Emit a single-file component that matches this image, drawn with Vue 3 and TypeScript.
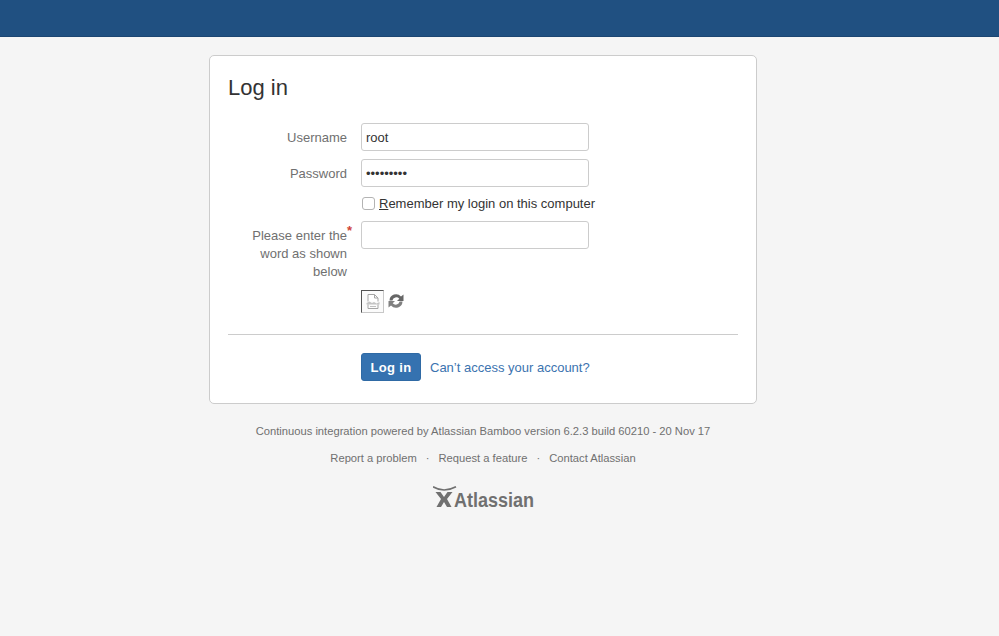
<script setup lang="ts">
import { ref } from 'vue'

const username = ref('root')
const password = ref('•••••••••')
const remember = ref(false)
const captcha = ref('')
</script>

<template>
  <div class="page">
    <header class="top-bar"></header>
    <main class="column">
      <section class="card">
        <h1>Log in</h1>
        <form class="login-form" @submit.prevent>
          <div class="row">
            <label class="field-label">Username</label>
            <input v-model="username" class="text" type="text" />
          </div>
          <div class="row">
            <label class="field-label">Password</label>
            <input v-model="password" class="text pw" type="text" />
          </div>
          <div class="row check-row">
            <span class="field-label"></span>
            <label class="check">
              <input v-model="remember" type="checkbox" />
              <span class="box"></span>
              <span><u>R</u>emember my login on this computer</span>
            </label>
          </div>
          <div class="row captcha-row">
            <label class="field-label">Please enter the<sup>*</sup> word as shown below</label>
            <input v-model="captcha" class="text" type="text" />
          </div>
          <div class="row image-row">
            <span class="field-label"></span>
            <span class="captcha-img">
              <svg width="16" height="17" viewBox="0 0 16 17">
                <path d="M3 8.500V1.500h6.500l3.500 3.500v3.500M9.500 1.500v3.500h3.500" fill="#fff" stroke="#a5a5a5" />
                <path d="M1.500 10l3-1.500 2.500 1.500 2-1 2.500 1.500 3-1.500v2.500h-13z" fill="#c4c4c4" />
                <path d="M3 11.500v4h10v-4" fill="none" stroke="#a5a5a5" />
                <path d="M5 13.500h6" stroke="#c0c0c0" />
              </svg>
            </span>
            <svg class="refresh" width="16" height="16" viewBox="0 0 16 16">
              <path d="M1.500 7.500A6.500 6.500 0 0 1 13 3.600L15.500 1.500V8H9l2.300-2.300A4 4 0 0 0 4.400 7.500z" fill="#666" />
              <path d="M14.500 8.500A6.500 6.500 0 0 1 3 12.400L.5 14.500V8H7l-2.300 2.300a4 4 0 0 0 6.900-1.800z" fill="#808080" />
            </svg>
          </div>
          <div class="actions">
            <span class="field-label"></span>
            <button class="submit" type="submit">Log in</button>
            <a class="forgot" href="#">Can’t access your account?</a>
          </div>
        </form>
      </section>

      <footer class="foot">
        <p class="version">Continuous integration powered by Atlassian Bamboo version 6.2.3 build 60210 - 20 Nov 17</p>
        <ul class="links">
          <li><a href="#">Report a problem</a></li>
          <li><a href="#">Request a feature</a></li>
          <li><a href="#">Contact Atlassian</a></li>
        </ul>
        <div class="logo">
          <svg width="24" height="22" viewBox="0 0 24 22">
            <path d="M0 .8C7 5 15 5 23 .8" fill="none" stroke="#707070" stroke-width="1.600" />
            <path d="M2.500 6h5l3.500 5 3.500-5h5l-5.500 7 4.500 8h-4.500l-3-5-3 5H3.500l4.500-8z" fill="#707070" />
          </svg>
          <span>Atlassian</span>
        </div>
      </footer>
    </main>
  </div>
</template>

<style>
html, body { margin: 0; background: #f5f5f5; }
</style>

<style scoped>
.page {
  min-height: 636px;
  background: #f5f5f5;
  font-family: "Liberation Sans", Arial, sans-serif;
  font-size: 13px;
  color: #333;
  overflow: hidden;
}
.top-bar {
  height: 37px;
  box-sizing: border-box;
  background: #205081;
  border-bottom: 1px solid #1c4672;
}
.column {
  width: 548px;
  margin: 18px 0 0 209px;
}
.card {
  box-sizing: border-box;
  height: 349px;
  padding: 19px 18px 0 18px;
  background: #fff;
  border: 1px solid #cccccc;
  border-radius: 5px;
}
h1 {
  margin: 0;
  font-size: 22px;
  font-weight: 400;
  line-height: 26px;
  color: #333;
}
.login-form {
  display: flex;
  flex-direction: column;
  margin-top: 22px;
}
.row {
  display: flex;
  align-items: flex-start;
  gap: 14px;
}
.row + .row { margin-top: 8px; }
.field-label {
  flex: 0 0 119px;
  text-align: right;
  line-height: 18px;
  padding-top: 6px;
  color: #707070;
}
.field-label sup {
  position: absolute;
  margin-top: -3px;
  font-size: 13px;
  font-weight: bold;
  line-height: 14px;
  color: #d04437;
}
.text {
  box-sizing: border-box;
  width: 228px;
  height: 28px;
  padding: 0 4px;
  border: 1px solid #cccccc;
  border-radius: 3px;
  background: #fff;
  font: 13px "Liberation Sans", Arial, sans-serif;
  color: #333;
  outline: none;
}
.check-row { margin-top: 8px; height: 18px; }
.check-row .field-label { padding-top: 0; }
.check {
  display: flex;
  align-items: center;
  gap: 4px;
  height: 17px;
  color: #333;
  white-space: nowrap;
}
.check input { display: none; }
.box {
  box-sizing: border-box;
  width: 13px;
  height: 13px;
  margin-left: 1px;
  border: 1px solid #b3b3b3;
  border-radius: 3px;
  background: #fff;
}
.row.captcha-row { margin-top: 8px; height: 59px; }
.row.image-row {
  margin-top: 10px;
  align-items: center;
  height: 22px;
}
.image-row .field-label { padding-top: 0; }
.captcha-img {
  box-sizing: border-box;
  display: flex;
  align-items: center;
  justify-content: center;
  width: 23px;
  height: 23px;
  margin-right: -10px;
  border: 1px solid #c8c8c8;
  border-top-color: #555;
  border-left-color: #555;
  background: #fbfbfb;
}
.actions {
  display: flex;
  align-items: center;
  gap: 14px;
  margin-top: 22px;
  padding-top: 18px;
  border-top: 1px solid #cccccc;
  width: 510px;
  box-sizing: border-box;
}
.actions .field-label { padding: 0; }
.submit {
  box-sizing: border-box;
  width: 60px;
  height: 28px;
  margin-right: -5px;
  padding: 0;
  background: #3572b0;
  border: 1px solid #2f6aa5;
  border-radius: 3px;
  color: #fff;
  font: bold 13px "Liberation Sans", Arial, sans-serif;
  letter-spacing: 0.3px;
}
.forgot {
  color: #3b73af;
  text-decoration: none;
  white-space: nowrap;
}
.foot {
  text-align: center;
  font-size: 11.2px;
  color: #707070;
}
.version { margin: 19px 0 0; line-height: 16px; }
.links {
  display: flex;
  justify-content: center;
  margin: 11px 0 0;
  padding: 0;
  list-style: none;
  line-height: 16px;
}
.links li + li::before {
  content: "·";
  margin: 0 9px;
}
.links a {
  color: #707070;
  text-decoration: none;
}
.logo {
  display: flex;
  justify-content: center;
  align-items: flex-start;
  margin-top: 20px;
  height: 22px;
}
.logo svg { flex: none; }
.logo span {
  flex: 0 0 80px;
  min-width: 0;
  margin: 5px 0 0 -3px;
  color: #707070;
  font: bold 20px/18px "Liberation Sans", sans-serif;
  transform: scaleX(0.9);
  transform-origin: left center;
  white-space: nowrap;
  text-align: left;
}
</style>
